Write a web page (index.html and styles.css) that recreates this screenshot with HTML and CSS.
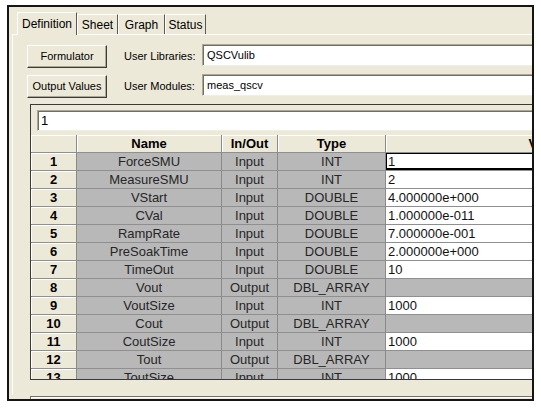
FILE: index.html
```html
<!DOCTYPE html>
<html>
<head>
<meta charset="utf-8">
<link rel="stylesheet" href="styles.css">
</head>
<body>
<div class="window">
  <div class="tabs">
    <div class="tab active w-def">Definition</div>
    <div class="tab w-sheet">Sheet</div>
    <div class="tab w-graph">Graph</div>
    <div class="tab w-status">Status</div>
  </div>
  <div class="panel">
    <div class="field-row first">
      <div class="btn">Formulator</div>
      <span class="label">User Libraries:</span>
      <div class="input">QSCVulib</div>
    </div>
    <div class="field-row second">
      <div class="btn">Output Values</div>
      <span class="label">User Modules:</span>
      <div class="input">meas_qscv</div>
    </div>
    <div class="grid-frame">
      <div class="formula">1</div>
      <div class="grid">
        <div class="hc"></div><div class="hc">Name</div><div class="hc">In/Out</div><div class="hc">Type</div><div class="hc">Value</div>

        <div class="rh">1</div><div class="c">ForceSMU</div><div class="c">Input</div><div class="c">INT</div><div class="v focus">1</div>
        <div class="rh">2</div><div class="c">MeasureSMU</div><div class="c">Input</div><div class="c">INT</div><div class="v">2</div>
        <div class="rh">3</div><div class="c">VStart</div><div class="c">Input</div><div class="c">DOUBLE</div><div class="v">4.000000e+000</div>
        <div class="rh">4</div><div class="c">CVal</div><div class="c">Input</div><div class="c">DOUBLE</div><div class="v">1.000000e-011</div>
        <div class="rh">5</div><div class="c">RampRate</div><div class="c">Input</div><div class="c">DOUBLE</div><div class="v">7.000000e-001</div>
        <div class="rh">6</div><div class="c">PreSoakTime</div><div class="c">Input</div><div class="c">DOUBLE</div><div class="v">2.000000e+000</div>
        <div class="rh">7</div><div class="c">TimeOut</div><div class="c">Input</div><div class="c">DOUBLE</div><div class="v">10</div>
        <div class="rh">8</div><div class="c">Vout</div><div class="c">Output</div><div class="c">DBL_ARRAY</div><div class="v out"></div>
        <div class="rh">9</div><div class="c">VoutSize</div><div class="c">Input</div><div class="c">INT</div><div class="v">1000</div>
        <div class="rh">10</div><div class="c">Cout</div><div class="c">Output</div><div class="c">DBL_ARRAY</div><div class="v out"></div>
        <div class="rh">11</div><div class="c">CoutSize</div><div class="c">Input</div><div class="c">INT</div><div class="v">1000</div>
        <div class="rh">12</div><div class="c">Tout</div><div class="c">Output</div><div class="c">DBL_ARRAY</div><div class="v out"></div>
        <div class="rh">13</div><div class="c">ToutSize</div><div class="c">Input</div><div class="c">INT</div><div class="v">1000</div>
      </div>
    </div>
    <div class="bottom-box"></div>
  </div>
</div>
</body>
</html>
```
FILE: styles.css
```css
html, body {
  margin: 0;
  padding: 0;
  background: #ffffff;
}
body {
  font-family: "Liberation Sans", Arial, sans-serif;
  color: #000;
}
.window {
  margin: 5px 0 0 7px;
  width: 523px;
  height: 392px;
  border: 2px solid #151515;
  background: #ECE9D8;
  overflow: hidden;
}
.tabs {
  display: flex;
  align-items: flex-end;
  height: 22px;
  margin: 5px 0 0 8px;
}
.tab {
  box-sizing: border-box;
  height: 20px;
  border: 1px solid;
  border-color: #ffffff #5a5850 transparent #ffffff;
  border-bottom: none;
  font-size: 12px;
  line-height: 20px;
  text-align: center;
  color: #000;
  background: #ECE9D8;
}
.tab.active {
  height: 23px;
  margin-bottom: -1px;
  line-height: 23px;
}
.w-def { width: 60px; }
.w-sheet { width: 41px; }
.w-graph { width: 47px; }
.w-status { width: 41px; }

.panel {
  margin-left: 3px;
  width: 700px;
  height: 360px;
  border-top: 1px solid #ffffff;
  border-left: 1px solid #ffffff;
  background: #ECE9D8;
}
.field-row {
  display: flex;
  align-items: flex-start;
  margin-left: 14px;
}
.field-row.first { padding-top: 10px; }
.field-row.second { margin-top: 7px; }
.btn {
  box-sizing: border-box;
  width: 80px;
  height: 23px;
  border: 1px solid;
  border-color: #ffffff #3c3b36 #3c3b36 #ffffff;
  box-shadow: inset -1px -1px 0 #ACA899;
  font-size: 11px;
  line-height: 20px;
  text-align: center;
  background: #ECE9D8;
}
.label {
  width: 78px;
  margin-left: 17px;
  font-size: 11px;
  line-height: 22px;
  white-space: nowrap;
}
.input {
  box-sizing: border-box;
  width: 400px;
  height: 22px;
  margin-top: -1px;
  border: 1px solid;
  border-color: #ACA899 #ffffff #F1EFE2 #ACA899;
  box-shadow: inset 1px 1px 0 #716F64;
  background: #ffffff;
  font-size: 11px;
  line-height: 20px;
  padding-left: 4px;
}
.grid-frame {
  box-sizing: content-box;
  margin: 6px 0 0 17px;
  width: 680px;
  height: 274px;
  border: 1px solid #3a3a3a;
  border-right: none;
  overflow: hidden;
  background: #ECE9D8;
}
.formula {
  box-sizing: border-box;
  margin: 5px 0 0 6px;
  width: 640px;
  height: 21px;
  border: 1px solid;
  border-color: #ACA899 #ffffff #F1EFE2 #ACA899;
  box-shadow: inset 1px 1px 0 #716F64;
  background: #ffffff;
  font-size: 13px;
  line-height: 19px;
  padding-left: 3px;
}
.grid {
  display: grid;
  grid-template-columns: 46px 145px 56px 108px 320px;
  grid-auto-rows: 18px;
  margin-top: 4px;
  font-size: 13px;
}
.grid > div {
  box-sizing: border-box;
  border-right: 1px solid #8a8a8a;
  border-bottom: 1px solid #8f8f8f;
  line-height: 17px;
  white-space: nowrap;
  overflow: hidden;
}
.hc {
  background: #ECE9D8;
  box-shadow: inset 1px 1px 0 #ffffff;
  font-weight: bold;
  text-align: center;
  color: #000;
}
.rh {
  background: #ECE9D8;
  box-shadow: inset 1px 1px 0 #ffffff;
  font-weight: bold;
  text-align: center;
  color: #000;
}
.c {
  background: #B8B8B8;
  text-align: center;
  color: #262626;
}
.v {
  background: #ffffff;
  padding-left: 2px;
  color: #111;
}
.v.out {
  background: #B8B8B8;
}
.v.focus {
  box-shadow: inset 1px 1px 0 #000, inset -2px -2px 0 #000;
}
.bottom-box {
  margin: 16px 0 0 17px;
  height: 20px;
  width: 680px;
  border-top: 1px solid #716F64;
  border-left: 1px solid #716F64;
  box-shadow: inset 1px 1px 0 #ffffff;
}
```
